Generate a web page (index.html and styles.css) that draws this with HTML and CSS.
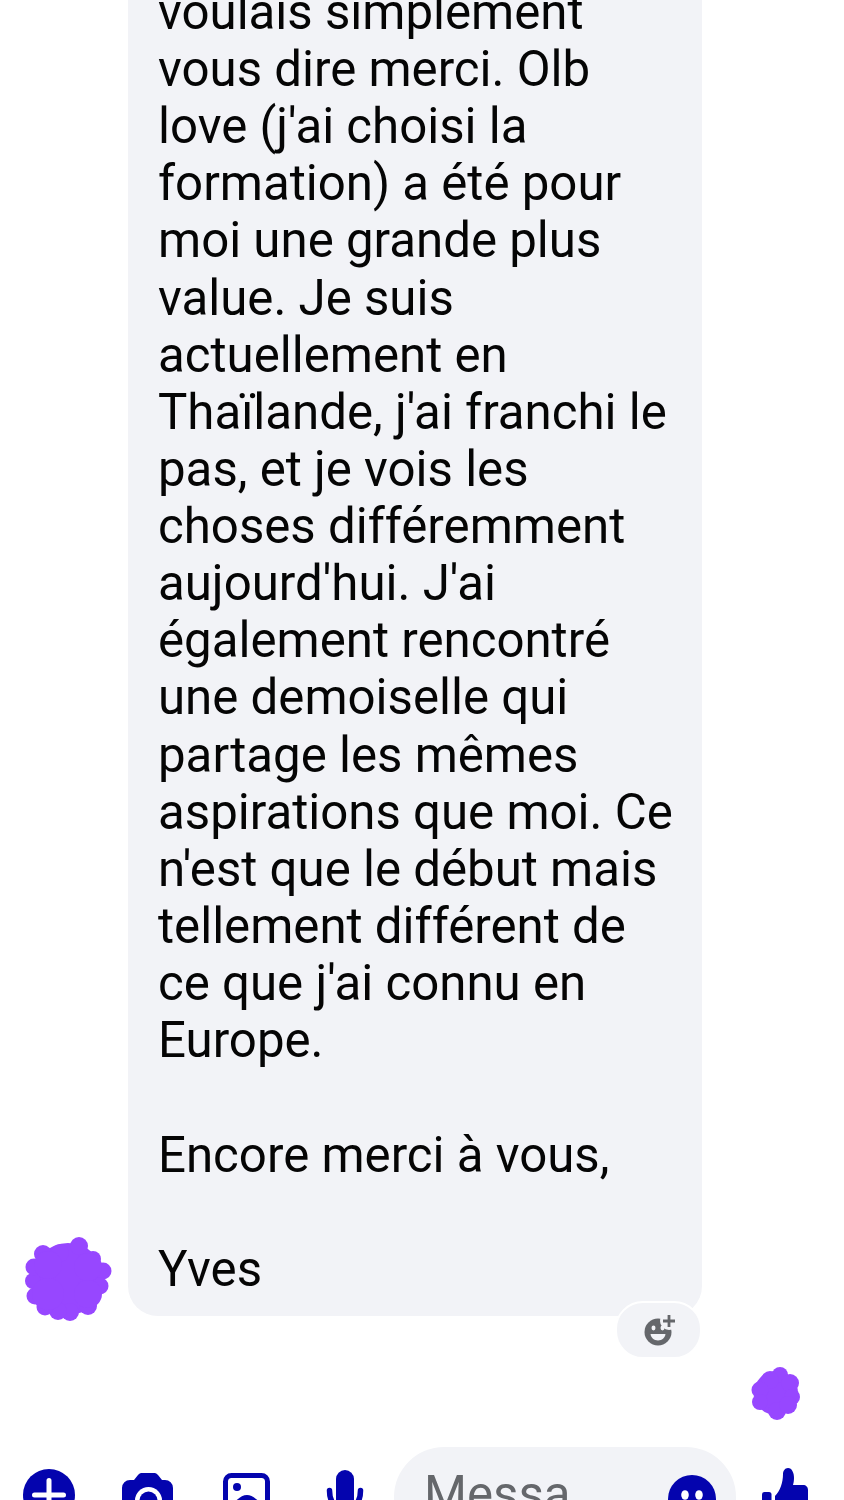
FILE: index.html
```html
<!DOCTYPE html>
<html lang="fr">
<head>
  <meta charset="UTF-8">
  <meta name="viewport" content="width=device-width, initial-scale=1.0">
  <title>Messenger</title>
  <link rel="stylesheet" href="styles.css">
</head>
<body>
  <div class="thread">
    <div class="message">
      <svg class="scribble-avatar" viewBox="25 1238 88 85">
        <g fill="#9747ff">
          <circle cx="68" cy="1280" r="36"/>
          <circle cx="79" cy="1247" r="9"/>
          <circle cx="43" cy="1255" r="9"/>
          <circle cx="60" cy="1254" r="9"/>
          <circle cx="93" cy="1260" r="8"/>
          <circle cx="103" cy="1272" r="8.500"/>
          <circle cx="100" cy="1287" r="8.500"/>
          <circle cx="88" cy="1307" r="9"/>
          <circle cx="70" cy="1313" r="9"/>
          <circle cx="58" cy="1312" r="9"/>
          <circle cx="45" cy="1308" r="8.500"/>
          <circle cx="35" cy="1297" r="8.500"/>
          <circle cx="33" cy="1282" r="8"/>
          <circle cx="34" cy="1268" r="8.500"/>
          <circle cx="88" cy="1295" r="14"/>
          <circle cx="48" cy="1295" r="16"/>
          <circle cx="48" cy="1266" r="14"/>
          <circle cx="88" cy="1268" r="14"/>
        </g>
      </svg>
      <div class="bubble">
        <p>voulais simplement<br>
        vous dire merci. Olb<br>
        love (j'ai choisi la<br>
        formation) a été pour<br>
        moi une grande plus<br>
        value. Je suis<br>
        actuellement en<br>
        Thaïlande, j'ai franchi le<br>
        pas, et je vois les<br>
        choses différemment<br>
        aujourd'hui. J'ai<br>
        également rencontré<br>
        une demoiselle qui<br>
        partage les mêmes<br>
        aspirations que moi. Ce<br>
        n'est que le début mais<br>
        tellement différent de<br>
        ce que j'ai connu en<br>
        Europe.</p>
        <p>Encore merci à vous,</p>
        <p>Yves</p>
        <div class="react-btn">
          <svg width="32" height="34" viewBox="0 0 32 34">
            <circle cx="15" cy="19" r="13.500" fill="#65676b"/>
            <circle cx="26" cy="8" r="9" fill="#f2f3f7"/>
            <path d="M26 2v12M20 8h12" stroke="#65676b" stroke-width="2.800" fill="none"/>
            <ellipse cx="10.500" cy="15" rx="2" ry="2.400" fill="#f2f3f7"/>
            <ellipse cx="19.500" cy="15" rx="2" ry="2.400" fill="#f2f3f7"/>
            <path d="M7.500 21h15c-.6 4-3.600 6.400-7.500 6.400S8.100 25 7.500 21z" fill="#f2f3f7"/>
          </svg>
        </div>
      </div>
    </div>
    <div class="seen">
      <svg class="scribble-seen" viewBox="751 1367 49 53">
        <g fill="#9747ff">
          <circle cx="776" cy="1393" r="22"/>
          <circle cx="780" cy="1375" r="8"/>
          <circle cx="770" cy="1380" r="9"/>
          <circle cx="790" cy="1383" r="9"/>
          <circle cx="792" cy="1397" r="8"/>
          <circle cx="760" cy="1390" r="8.500"/>
          <circle cx="760" cy="1402" r="8"/>
          <circle cx="777" cy="1411" r="9"/>
          <circle cx="788" cy="1405" r="9"/>
        </g>
      </svg>
    </div>
  </div>

  <div class="composer">
    <svg class="tool" viewBox="0 0 98 60">
      <circle cx="49" cy="48" r="26" fill="#0404ae"/>
      <path d="M34.500 48h29M49 33.500v29" stroke="#fff" stroke-width="5" stroke-linecap="round"/>
    </svg>
    <svg class="tool" viewBox="0 0 98 60">
      <path d="M24 41a8 8 0 0 1 8-8h4l4-5a5 5 0 0 1 3-2h14a5 5 0 0 1 3 2l4 5h3a8 8 0 0 1 8 8v19H24z" fill="#0404ae"/>
      <circle cx="50.500" cy="53.500" r="13.500" fill="#fff"/>
      <circle cx="50.500" cy="53.500" r="9" fill="#0404ae"/>
    </svg>
    <svg class="tool" viewBox="0 0 98 60">
      <rect x="29.500" y="28.500" width="42" height="44" rx="6" fill="none" stroke="#0404ae" stroke-width="5"/>
      <circle cx="41" cy="40" r="4" fill="#0404ae"/>
      <path d="M36 58c5-6 10-10 15-10s10 4 15 10v8H36z" fill="#0404ae"/>
    </svg>
    <svg class="tool" viewBox="0 0 98 60">
      <rect x="42" y="23" width="18" height="41" rx="9" fill="#0404ae"/>
      <path d="M35.500 43.500c0 5 1 9 3 12 3 5 7 7 12.500 7s9.500-2 12.500-7c2-3 3-7 3-12" fill="none" stroke="#0404ae" stroke-width="5.500" stroke-linecap="round"/>
    </svg>
    <div class="input-pill">
      <span class="placeholder">Messa</span>
      <svg class="emoji" viewBox="0 0 50 60">
        <circle cx="25" cy="52" r="24" fill="#0404ae"/>
        <ellipse cx="18" cy="48" rx="3.800" ry="4.800" fill="#fff"/>
        <ellipse cx="32" cy="48" rx="3.800" ry="4.800" fill="#fff"/>
      </svg>
    </div>
    <svg class="tool" viewBox="0 0 98 60">
      <path d="M47 27c0-3 2-6 5-6 4 0 6 5 6 10 0 3-.5 5-1 7h10c3 0 5 2 5 5v20H39V49c5-5 8-13 8-22z" fill="#0404ae"/>
      <rect x="26" y="45" width="9.500" height="20" rx="2.500" fill="#0404ae"/>
    </svg>
  </div>
</body>
</html>
```

FILE: styles.css
```css
html, body {
  margin: 0;
  padding: 0;
}
body {
  width: 844px;
  height: 1500px;
  overflow: hidden;
  background: #fff;
  font-family: Roboto, "Liberation Sans", sans-serif;
  color: #050505;
}
.thread {
  height: 1447px;
  display: flex;
  flex-direction: column;
  justify-content: flex-end;
}
.message {
  display: flex;
  align-items: flex-end;
  padding-left: 25px;
}
.scribble-avatar {
  width: 88px;
  height: 85px;
  flex: none;
  margin-bottom: -6px;
}
.bubble {
  position: relative;
  width: 544px;
  margin-left: 15px;
  padding: 0 0 18px 30px;
  background: #f2f3f7;
  border-radius: 0 0 30px 30px;
  font-size: 49.2px;
  line-height: 57.14px;
}
.bubble p {
  margin: 0 0 57.14px;
}
.bubble p:last-of-type {
  margin-bottom: 0;
}
.react-btn {
  position: absolute;
  left: 487px;
  bottom: -43px;
  width: 83px;
  height: 54px;
  display: flex;
  align-items: center;
  justify-content: center;
  background: #f2f3f7;
  border: 2px solid #fff;
  border-radius: 28px;
}
.seen {
  display: flex;
  justify-content: flex-end;
  padding: 51px 44px 27px 0;
}
.scribble-seen {
  width: 49px;
  height: 53px;
}
.composer {
  height: 53px;
  overflow: hidden;
  display: flex;
  align-items: flex-start;
}
.tool {
  width: 98px;
  height: 60px;
  flex: none;
}
.input-pill {
  width: 342px;
  height: 110px;
  flex: none;
  box-sizing: border-box;
  margin-left: 2px;
  padding: 0 19px 0 30px;
  display: flex;
  justify-content: space-between;
  background: #f2f3f7;
  border-radius: 50px;
}
.placeholder {
  font-size: 49.2px;
  line-height: 94px;
  color: #65676b;
  white-space: nowrap;
}
.emoji {
  width: 50px;
  height: 60px;
}
```
